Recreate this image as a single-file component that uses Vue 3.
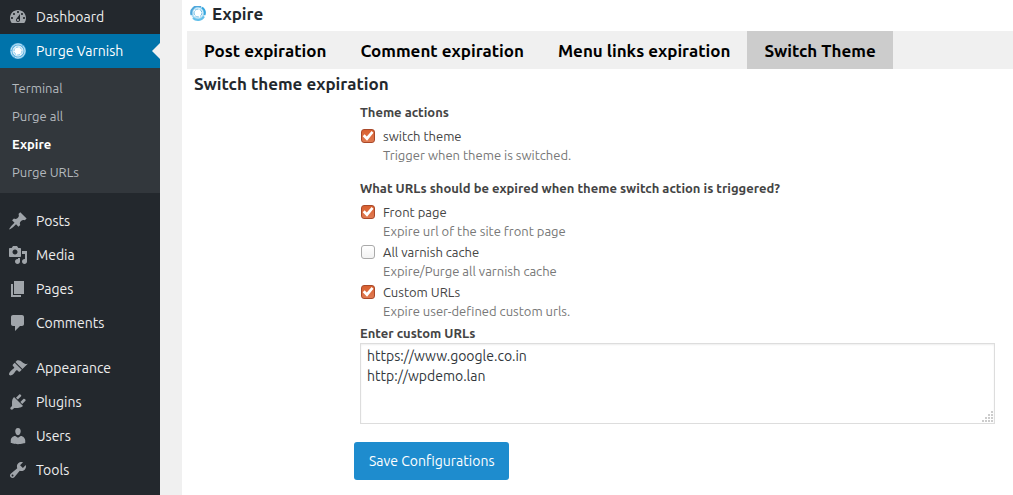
<script setup>
import { ref } from 'vue'

const submenu = ['Terminal', 'Purge all', 'Expire', 'Purge URLs']

const dashboardIcon =
  'M3.76 16h12.48c1.1-1.37 1.76-3.11 1.76-5 0-4.42-3.58-8-8-8s-8 3.58-8 8c0 1.89.66 3.63 1.76 5zM10 4c.55 0 1 .45 1 1s-.45 1-1 1-1-.45-1-1 .45-1 1-1zM6 6c.55 0 1 .45 1 1s-.45 1-1 1-1-.45-1-1 .45-1 1-1zm8 0c.55 0 1 .45 1 1s-.45 1-1 1-1-.45-1-1 .45-1 1-1zm-5.37 5.55L12 7v6c0 1.1-.9 2-2 2s-2-.9-2-2c0-.57.24-1.08.63-1.45zM4 10c.55 0 1 .45 1 1s-.45 1-1 1-1-.45-1-1 .45-1 1-1zm12 0c.55 0 1 .45 1 1s-.45 1-1 1-1-.45-1-1 .45-1 1-1zm-5 3c0-.55-.45-1-1-1s-1 .45-1 1 .45 1 1 1 1-.45 1-1z'

const groups = [
  [
    {
      name: 'Posts',
      icon: 'M10.44 3.02l1.82-1.82 6.36 6.35-1.83 1.82c-1.05-.68-2.48-.57-3.41.36l-.75.75c-.92.93-1.04 2.35-.35 3.41l-1.83 1.82-2.41-2.41-2.8 2.79c-.42.42-3.38 2.71-3.8 2.29s1.86-3.39 2.28-3.81l2.79-2.79L4.1 9.36l1.83-1.82c1.05.69 2.48.57 3.4-.36l.75-.75c.93-.92 1.05-2.35.36-3.41z'
    },
    {
      name: 'Media',
      icon: 'M13 11V4c0-.55-.45-1-1-1h-1.67L9 1H5L3.67 3H2c-.55 0-1 .45-1 1v7c0 .55.45 1 1 1h10c.55 0 1-.45 1-1zM7 4.5c1.38 0 2.5 1.12 2.5 2.5S8.38 9.5 7 9.5 4.5 8.38 4.5 7 5.62 4.5 7 4.5zM14 6h5v10.5c0 1.38-1.12 2.5-2.5 2.5S14 17.88 14 16.5s1.12-2.5 2.5-2.5c.17 0 .34.02.5.05V9h-3V6zm-4 8.05V13h2v3.5c0 1.38-1.12 2.5-2.5 2.5S7 17.88 7 16.5 8.12 14 9.5 14c.17 0 .34.02.5.05z'
    },
    { name: 'Pages', icon: 'M6 15V2h10v13H6zm-1 1h8v2H3V5h2v11z' },
    {
      name: 'Comments',
      icon: 'M5 2h9c1.1 0 2 .9 2 2v7c0 1.1-.9 2-2 2h-2l-5 5v-5H5c-1.1 0-2-.9-2-2V4c0-1.1.9-2 2-2z'
    }
  ],
  [
    {
      name: 'Appearance',
      icon: 'M14.48 11.06L7.41 3.99l1.5-1.5c.5-.56 2.3-.47 3.51.32 1.21.8 1.43 1.28 2.91 2.1 1.18.64 2.45 1.26 4.45.85zm-.71.71L6.7 4.7 4.93 6.47c-.39.39-.39 1.02 0 1.41l1.06 1.06c.39.39.39 1.03 0 1.42-.6.6-1.43 1.11-2.21 1.69-.35.26-.7.53-1.01.84C1.43 14.23.4 16.08 1.4 17.07c.99 1 2.84-.03 4.18-1.36.31-.31.58-.66.85-1.02.57-.78 1.08-1.61 1.69-2.21.39-.39 1.02-.39 1.41 0l1.06 1.06c.39.39 1.02.39 1.41 0z'
    },
    {
      name: 'Plugins',
      icon: 'M13.11 4.36L9.87 7.6 8 5.73l3.24-3.24c.35-.34 1.05-.2 1.56.32.52.51.66 1.21.31 1.55zm-8 1.77l.91-1.12 9.01 9.01-1.19.84c-.71.71-2.63 1.16-3.82 1.16H6.14L4.9 17.26c-.59.59-1.54.59-2.12 0-.59-.58-.59-1.53 0-2.12l1.24-1.24v-3.88c0-1.13.4-3.19 1.09-3.89zm7.26 3.97l3.24-3.24c.34-.35 1.04-.21 1.55.31.52.51.66 1.21.31 1.55l-3.24 3.25z'
    },
    {
      name: 'Users',
      icon: 'M10 9.25c-2.27 0-2.73-3.44-2.73-3.44C7 4.02 7.82 2 9.97 2c2.16 0 2.98 2.02 2.71 3.81 0 0-.41 3.44-2.68 3.44zm0 2.57L12.72 10c2.39 0 4.52 2.33 4.52 4.53v2.49s-3.65 1.13-7.24 1.13c-3.65 0-7.24-1.13-7.24-1.13v-2.49c0-2.25 1.94-4.48 4.47-4.48z'
    },
    {
      name: 'Tools',
      icon: 'M16.68 9.77c-1.34 1.34-3.3 1.67-4.95.99l-5.41 6.52c-.99.99-2.59.99-3.58 0s-.99-2.59 0-3.57l6.52-5.42c-.68-1.65-.35-3.61.99-4.95 1.28-1.28 3.12-1.62 4.72-1.06l-2.89 2.89 2.82 2.82 2.86-2.87c.53 1.58.18 3.39-1.08 4.65zM3.81 16.21c.4.39 1.04.39 1.43 0 .4-.4.4-1.04 0-1.43-.39-.4-1.03-.4-1.43 0-.39.39-.39 1.03 0 1.43z'
    }
  ]
]

const tabs = ['Post expiration', 'Comment expiration', 'Menu links expiration', 'Switch Theme']
const activeTab = ref('Switch Theme')

const sections = ref([
  {
    title: 'Theme actions',
    options: [{ id: 'switch-theme', label: 'switch theme', hint: 'Trigger when theme is switched.', on: true }]
  },
  {
    title: 'What URLs should be expired when theme switch action is triggered?',
    options: [
      { id: 'front-page', label: 'Front page', hint: 'Expire url of the site front page', on: true },
      { id: 'all-cache', label: 'All varnish cache', hint: 'Expire/Purge all varnish cache', on: false },
      { id: 'custom-urls', label: 'Custom URLs', hint: 'Expire user-defined custom urls.', on: true }
    ]
  }
])

const urls = ref('https://www.google.co.in\nhttp://wpdemo.lan')
</script>

<template>
  <div class="page">
    <nav class="sidebar" aria-label="Admin menu">
      <a class="item" href="#">
        <svg class="icon" viewBox="0 0 20 20"><path :d="dashboardIcon" /></svg>
        Dashboard
      </a>
      <a class="item current" href="#">
        <svg class="icon" viewBox="0 0 20 20">
          <circle class="halo" cx="10" cy="10" r="8" />
          <circle class="outer" cx="10" cy="10" r="7" />
          <circle class="inner" cx="10" cy="10" r="5" />
          <circle class="dots" cx="10" cy="10" r="4" />
        </svg>
        Purge Varnish
      </a>
      <div class="submenu">
        <a v-for="s in submenu" :key="s" href="#" :class="{ chosen: s === 'Expire' }">{{ s }}</a>
      </div>
      <div v-for="(g, i) in groups" :key="i" class="group">
        <a v-for="m in g" :key="m.name" class="item" href="#">
          <svg class="icon" viewBox="0 0 20 20"><path :d="m.icon" /></svg>
          {{ m.name }}
        </a>
      </div>
    </nav>

    <main class="content">
      <h1>
        <svg class="logo" viewBox="0 0 16 16">
          <circle class="ring" cx="8" cy="7" r="6" />
          <path class="arc-dark" d="M1.500 9A6.800 6.800 0 0 1 11 .9" />
          <path class="arc-mid" d="M12 1.500A6.800 6.800 0 0 1 14.500 9" />
          <path class="arc-light" d="M14 10.500A7 7 0 0 1 3 12" />
          <circle class="core" cx="8" cy="7" r="4" />
        </svg>
        Expire
      </h1>
      <div class="tabs" role="tablist">
        <button
          v-for="t in tabs"
          :key="t"
          type="button"
          role="tab"
          :aria-selected="t === activeTab"
          :class="{ active: t === activeTab }"
          @click="activeTab = t"
        >{{ t }}</button>
      </div>
      <h2>Switch theme expiration</h2>
      <form class="form" @submit.prevent>
        <fieldset v-for="s in sections" :key="s.title">
          <legend>{{ s.title }}</legend>
          <div v-for="o in s.options" :key="o.id" class="option">
            <input :id="o.id" v-model="o.on" type="checkbox" :aria-describedby="o.id + '-hint'" />
            <label :for="o.id">{{ o.label }}</label>
            <p :id="o.id + '-hint'">{{ o.hint }}</p>
          </div>
        </fieldset>
        <label class="urls-label" for="urls">Enter custom URLs</label>
        <div class="area">
          <textarea id="urls" v-model="urls" rows="3" spellcheck="false"></textarea>
          <svg class="grip" viewBox="0 0 12 12" aria-hidden="true">
            <path d="M10 0h2v2h-2zM7 3h2v2H7zM10 3h2v2h-2zM4 6h2v2H4zM7 6h2v2H7zM10 6h2v2h-2zM1 9h2v2H1zM4 9h2v2H4zM7 9h2v2H7zM10 9h2v2h-2z" />
          </svg>
        </div>
        <button class="save" type="submit">Save Configurations</button>
      </form>
    </main>
  </div>
</template>

<style>
body {
  background: #f0f0f0;
}
</style>

<style scoped>
.page {
  display: flex;
  min-height: 100vh;
  overflow: hidden;
  font-family: Ubuntu, "Noto Sans", sans-serif;
  font-size: 13px;
  color: #444;
}
.sidebar {
  flex: 0 0 160px;
  background: #23282d;
  margin-right: 22px;
}
.item {
  display: flex;
  align-items: center;
  gap: 8px;
  height: 34px;
  padding-left: 8px;
  position: relative;
  color: #eee;
  font-size: 14px;
  text-decoration: none;
}
.icon {
  width: 20px;
  height: 20px;
  fill: #a0a5aa;
}
.current {
  background: #0073aa;
  color: #fff;
}
.current::after {
  content: "";
  position: absolute;
  right: 0;
  top: 9px;
  border: 8px solid transparent;
  border-left-width: 0;
  border-right-color: #f1f1f1;
}
.halo {
  fill: #5fb4e2;
}
.outer {
  fill: none;
  stroke: #c4e4f5;
  stroke-width: 1;
  stroke-dasharray: 14 1 7 1;
}
.inner {
  fill: #fff;
  stroke: #e8f5fc;
  stroke-width: 1;
}
.dots {
  fill: none;
  stroke: #7cc4ea;
  stroke-width: 1;
  stroke-dasharray: 3 1;
}
.submenu {
  padding: 6px 0 7px;
  background: #32373c;
}
.submenu a {
  display: block;
  padding: 0 12px;
  line-height: 28px;
  color: #b4b9be;
  text-decoration: none;
}
.submenu .chosen {
  color: #fff;
  font-weight: 700;
}
.group {
  margin-top: 11px;
}
.content {
  flex: 1;
  min-width: 0;
  padding-left: 5px;
  background: #fff;
}
h1,
h2 {
  margin: 0;
  font-size: 17px;
  font-weight: 700;
  color: #23282d;
}
h1 {
  display: flex;
  align-items: center;
  gap: 6px;
  padding: 2px 3px 5px;
  line-height: 24px;
}
h2 {
  padding: 3px 7px 6px;
  line-height: 24px;
}
.logo {
  width: 16px;
  height: 16px;
  fill: none;
  stroke-width: 2;
}
.ring {
  stroke: #a9dbf4;
  stroke-width: 2;
}
.arc-dark {
  stroke: #4ea6da;
}
.arc-mid {
  stroke: #36a6de;
}
.arc-light {
  stroke: #63c0ea;
}
.core {
  stroke: #63b8e4;
  stroke-width: 1;
  stroke-dasharray: 4 1;
}
.tabs {
  display: flex;
  background: #f0f0f0;
}
.tabs button {
  padding: 2px 17px 0;
  border: 0;
  background: none;
  font: 700 17px/36px Ubuntu, "Noto Sans", sans-serif;
  color: #000;
  white-space: nowrap;
}
.tabs .active {
  background: #ccc;
}
.form {
  padding: 0 18px 15px 173px;
}
fieldset {
  margin: 0 0 12px;
  padding: 0;
  border: 0;
}
fieldset + fieldset {
  margin-bottom: 1px;
}
legend,
.urls-label {
  display: block;
  padding: 0;
  font-weight: 700;
  line-height: 20px;
}
legend {
  margin-bottom: 4px;
}
.option {
  display: grid;
  grid-template-columns: 16px 1fr;
  column-gap: 7px;
  align-items: center;
  padding-bottom: 2px;
  line-height: 20px;
}
.option input {
  appearance: none;
  box-sizing: border-box;
  width: 14px;
  height: 14px;
  margin: 0 1px;
  border: 1px solid #aaa;
  border-radius: 3px;
  background: linear-gradient(#fff, #f2f2f2);
}
.option input:checked {
  border-color: #a9492a;
  background: linear-gradient(#d9602f, #e07b52);
  display: grid;
}
.option input:checked::before {
  content: "";
  background: #fff;
  clip-path: polygon(6% 52%, 22% 36%, 40% 54%, 80% 8%, 96% 22%, 42% 90%);
}
.option p {
  grid-column: 2;
  margin: 0;
  line-height: 18px;
  color: #777;
}
.area {
  position: relative;
}
textarea {
  display: block;
  box-sizing: border-box;
  width: 100%;
  height: 81px;
  padding: 2px 6px;
  border: 1px solid #ddd;
  box-shadow: inset 0 1px 2px rgba(0, 0, 0, 0.07);
  background: #fff;
  font: 14px/20px Ubuntu, "Noto Sans", sans-serif;
  color: #32373c;
  resize: none;
}
.grip {
  position: absolute;
  right: 2px;
  bottom: 1px;
  width: 12px;
  height: 12px;
  fill: #ccc;
}
.save {
  margin: 18px 0 0 -6px;
  padding: 0 15px;
  border: 0;
  border-radius: 3px;
  background: #1e8cce;
  font: 14px/38px Ubuntu, "Noto Sans", sans-serif;
  color: #fff;
}
</style>
